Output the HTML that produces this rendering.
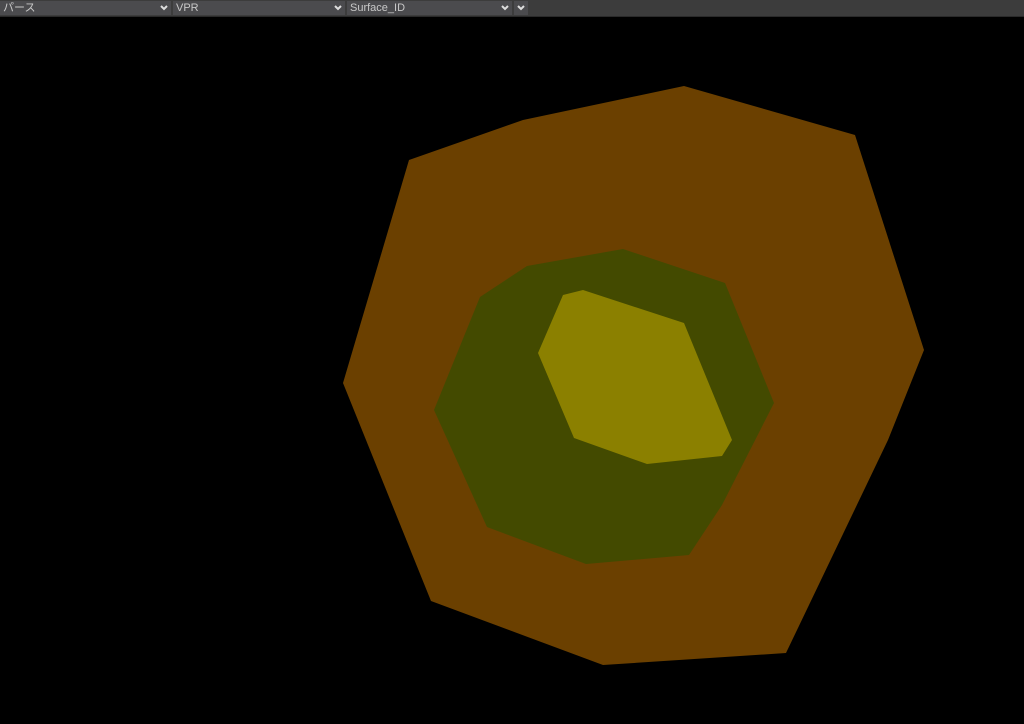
<!DOCTYPE html>
<html><head><meta charset="utf-8"><style>
html,body{margin:0;padding:0;width:1024px;height:724px;background:#000;overflow:hidden;font-family:"Liberation Sans","Noto Sans CJK JP",sans-serif;}
.bar{position:absolute;left:0;top:0;width:1024px;height:16px;background:#3c3c3c;border-bottom:1px solid #2a2a2a;}
.dd{position:absolute;top:1px;height:14px;background:#4b4b4e;color:#c8c8c8;font-size:11px;line-height:14px;padding-left:3px;box-sizing:border-box;}
.dd svg{position:absolute;right:3px;top:4px;}
</style></head><body>
<div class="bar">
<div class="dd" style="left:0;width:171px">パース<svg width="8" height="6"><path d="M1 1L4 4L7 1" stroke="#ddd" stroke-width="2" fill="none"/></svg></div>
<div class="dd" style="left:173px;width:172px">VPR<svg width="8" height="6"><path d="M1 1L4 4L7 1" stroke="#ddd" stroke-width="2" fill="none"/></svg></div>
<div class="dd" style="left:347px;width:165px">Surface_ID<svg width="8" height="6"><path d="M1 1L4 4L7 1" stroke="#ddd" stroke-width="2" fill="none"/></svg></div>
<div class="dd" style="left:514px;width:14px"><svg width="8" height="6"><path d="M1 1L4 4L7 1" stroke="#ddd" stroke-width="2" fill="none"/></svg></div>
</div>
<svg style="position:absolute;left:0;top:0" width="1024" height="724">
<polygon fill="#6b4000" points="409,160 523,120 684,86 855,135 924,350 888,440 786,653 603,665 431,601 343,383"/>
<polygon fill="#434a00" points="480,297 527,266 623,249 725,283 774,403 722,505 689,555 586,564 487,527 434,410"/>
<polygon fill="#8b8000" points="563,295 583,290 684,323 732,440 722,456 647,464 574,438 538,353"/>
</svg>
</body></html>
